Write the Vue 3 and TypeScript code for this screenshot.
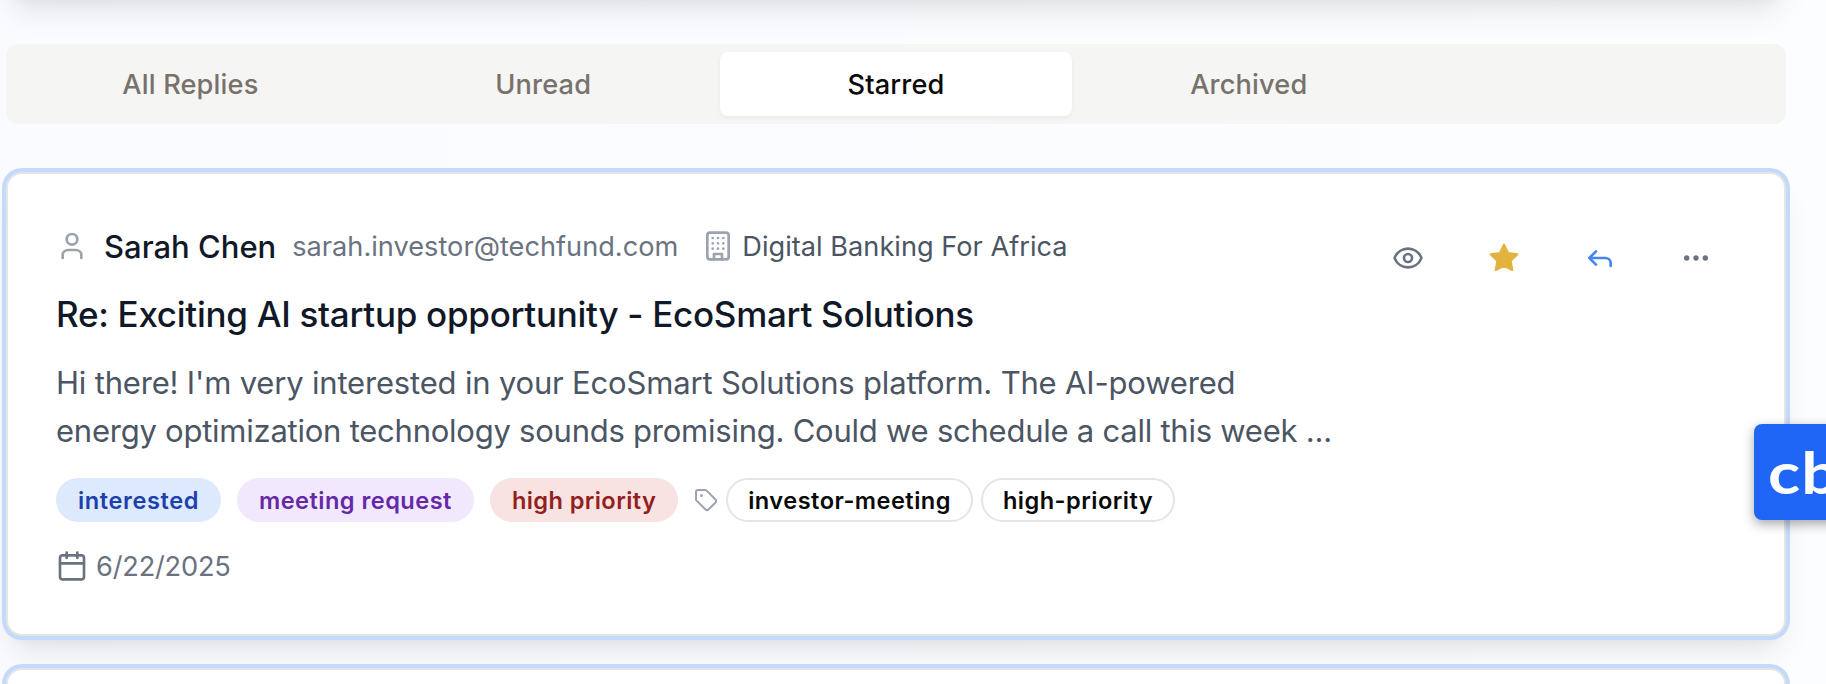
<script setup lang="ts">
import { ref } from 'vue'

const tabs = ['All Replies', 'Unread', 'Starred', 'Archived']
const active = ref('Starred')
const badges = [
  { label: 'interested', tone: 'blue' },
  { label: 'meeting request', tone: 'purple' },
  { label: 'high priority', tone: 'red' },
]
const tags = ['investor-meeting', 'high-priority']
</script>

<template>
  <main class="page">
    <div class="panel-above"></div>
    <nav class="tabs">
      <button v-for="tab in tabs" :key="tab" class="tab" :class="{ active: tab === active }" @click="active = tab">{{ tab }}</button>
    </nav>
    <article class="card">
      <div class="content">
        <div class="sender">
          <svg class="icon muted" viewBox="0 0 24 24"><path d="M19 21v-2a4 4 0 0 0-4-4H9a4 4 0 0 0-4 4v2" /><circle cx="12" cy="7" r="4" /></svg>
          <span class="name">Sarah Chen</span>
          <span class="email">sarah.investor@techfund.com</span>
          <span class="company">
            <svg class="icon muted" viewBox="0 0 24 24"><rect x="4" y="2" width="16" height="20" rx="2" /><path d="M9 22v-4h6v4M8 6h.01M16 6h.01M12 6h.01M12 10h.01M12 14h.01M16 10h.01M16 14h.01M8 10h.01M8 14h.01" /></svg>
            <span>Digital Banking For Africa</span>
          </span>
        </div>
        <h3 class="title">Re: Exciting AI startup opportunity - EcoSmart Solutions</h3>
        <p class="body">
          <span class="line-one">Hi there! I'm very interested in your EcoSmart Solutions platform. The AI-powered</span>
          <span class="line-two">energy optimization technology sounds promising. Could we schedule a call this week ...</span>
        </p>
        <div class="badges">
          <span v-for="b in badges" :key="b.label" class="badge" :class="b.tone">{{ b.label }}</span>
          <div class="tags">
            <svg class="icon muted small" viewBox="0 0 24 24"><path d="M12.586 2.586A2 2 0 0 0 11.172 2H4a2 2 0 0 0-2 2v7.172a2 2 0 0 0 .586 1.414l8.704 8.704a2.426 2.426 0 0 0 3.42 0l6.58-6.58a2.426 2.426 0 0 0 0-3.42z" /><circle cx="7.5" cy="7.5" r=".5" fill="currentColor" /></svg>
            <span v-for="tag in tags" :key="tag" class="badge outline">{{ tag }}</span>
          </div>
        </div>
        <div class="date">
          <svg class="icon" viewBox="0 0 24 24"><path d="M8 2v4M16 2v4M3 10h18" /><rect x="3" y="4" width="18" height="18" rx="2" /></svg>
          <span>6/22/2025</span>
        </div>
      </div>
      <div class="actions">
        <button class="action" aria-label="View"><svg class="icon" viewBox="0 0 24 24"><path d="M2.062 12.348a1 1 0 0 1 0-.696 10.75 10.75 0 0 1 19.876 0 1 1 0 0 1 0 .696 10.75 10.75 0 0 1-19.876 0" /><circle cx="12" cy="12" r="3" /></svg></button>
        <button class="action star" aria-label="Star"><svg class="icon" viewBox="0 0 24 24"><path d="M12 2l3.09 6.26L22 9.27l-5 4.87 1.18 6.88L12 17.77l-6.18 3.25L7 14.14 2 9.27l6.91-1.01L12 2z" /></svg></button>
        <button class="action reply" aria-label="Reply"><svg class="icon" viewBox="0 0 24 24"><path d="M9 17l-5-5 5-5M20 18v-2a4 4 0 0 0-4-4H4" /></svg></button>
        <button class="action" aria-label="More"><svg class="icon" viewBox="0 0 24 24"><circle cx="12" cy="12" r="1" /><circle cx="19" cy="12" r="1" /><circle cx="5" cy="12" r="1" /></svg></button>
      </div>
    </article>
    <article class="card next"></article>
    <aside class="widget"><span class="logo">cb</span></aside>
  </main>
</template>

<style>
body { margin: 0; }
</style>

<style scoped>
.page { position: relative; box-sizing: border-box; height: 684px; overflow: hidden; padding: 0 40px 0 6px; background: linear-gradient(90deg, #f9fbfe, #fcfdff); font-family: Inter, "Liberation Sans", sans-serif; }
.panel-above { height: 100px; margin: -104px 0 48px; border-radius: 16px; background: #fff; box-shadow: 0 20px 30px -6px rgba(0,0,0,.1), 0 8px 12px -8px rgba(0,0,0,.1); }
.tabs { display: grid; grid-template-columns: repeat(5, 1fr); box-sizing: border-box; height: 80px; padding: 8px; border-radius: 12px; background: #f5f5f4; }
button { border: 0; padding: 0; background: none; font: inherit; }
.tab { padding-top: 1px; border-radius: 8px; color: #78716c; font-size: 27.2px; font-weight: 500; line-height: 40px; letter-spacing: .14px; }
.tab.active { background: #fff; color: #0c0a09; box-shadow: 0 2px 4px rgba(0,0,0,.05); }
.card { display: flex; justify-content: space-between; box-sizing: border-box; height: 464px; margin-top: 48px; padding: 48px; border: 2px solid #e5e5e5; border-radius: 16px; background: #fff; box-shadow: 0 0 0 4px #c3dafc, 0 20px 30px -6px rgba(0,0,0,.1), 0 8px 12px -8px rgba(0,0,0,.1); }
.card.next { margin-top: 32px; }
.icon { flex: none; width: 32px; height: 32px; fill: none; stroke: currentColor; stroke-width: 2; stroke-linecap: round; stroke-linejoin: round; }
.icon.small { width: 24px; height: 24px; }
.muted { color: #9ca3af; }
.sender { display: flex; align-items: center; gap: 16px; height: 48px; white-space: nowrap; }
.name { color: #111827; font-size: 31px; font-weight: 500; }
.email { color: #6b7280; font-size: 27.2px; }
.company { display: flex; align-items: center; gap: 8px; margin-left: 8px; color: #4b5563; font-size: 27.2px; }
.title { margin: 16px 0 0; color: #111827; font-size: 35px; font-weight: 500; line-height: 56px; letter-spacing: -.285px; white-space: nowrap; }
.body { margin: 17px 0 0; color: #4b5563; font-size: 31px; line-height: 48px; white-space: nowrap; }
.body span { display: block; }
.line-one { letter-spacing: -.18px; }
.line-two { letter-spacing: -.24px; }
.badges { display: flex; align-items: center; gap: 16px; margin-top: 23px; }
.badge { box-sizing: border-box; height: 44px; padding: 5px 20px 3px; border: 2px solid transparent; border-radius: 22px; font-size: 23.6px; font-weight: 600; line-height: 32px; white-space: nowrap; }
.blue { background: #dde9fc; color: #1e40af; letter-spacing: .58px; }
.purple { background: #f1e8fe; color: #6529a8; letter-spacing: .46px; }
.red { background: #f9e2e2; color: #931f1f; letter-spacing: .4px; }
.outline { border-color: #e5e5e5; color: #0a0a0a; letter-spacing: .46px; }
.tags { display: flex; align-items: center; gap: 8px; }
.date { display: flex; align-items: center; gap: 8px; height: 40px; margin-top: 24px; color: #6b7280; font-size: 27.2px; letter-spacing: -.2px; }
.actions { display: flex; gap: 16px; }
.action { display: flex; align-items: center; justify-content: center; width: 80px; height: 72px; color: #6b7280; }
.star { color: #e2b33d; }
.star .icon { fill: currentColor; stroke-width: 1.6; }
.reply { color: #4785f5; }
.widget { position: absolute; top: 424px; left: 1754px; box-sizing: border-box; width: 96px; height: 96px; padding-left: 14px; border-radius: 8px; background: #1f66f7; box-shadow: 0 4px 12px rgba(0,0,0,.35); color: #fff; font: 700 58px/96px Lato, sans-serif; }
.logo { display: inline-block; transform: scaleX(1.15); transform-origin: left; letter-spacing: 1px; }
</style>
